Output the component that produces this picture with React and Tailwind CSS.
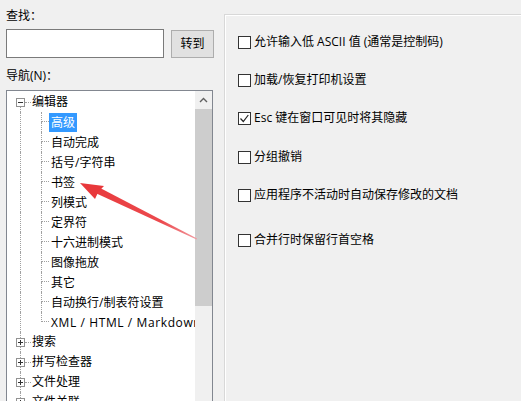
import React from 'react';

const editorItems = [
  '高级',
  '自动完成',
  '括号/字符串',
  '书签',
  '列模式',
  '定界符',
  '十六进制模式',
  '图像拖放',
  '其它',
  '自动换行/制表符设置',
  'XML / HTML / Markdown',
];

const otherRoots = ['搜索', '拼写检查器', '文件处理', '文件关联'];

const options = [
  { label: '允许输入低 ASCII 值 (通常是控制码)', checked: false, mt: 'mt-[17px]' },
  { label: '加载/恢复打印机设置', checked: false, mt: 'mt-[18px]' },
  { label: 'Esc 键在窗口可见时将其隐藏', checked: true, mt: 'mt-[18px]' },
  { label: '分组撤销', checked: false, mt: 'mt-[19px]' },
  { label: '应用程序不活动时自动保存修改的文档', checked: false, mt: 'mt-[18px]' },
  { label: '合并行时保留行首空格', checked: false, mt: 'mt-[25px]' },
];

function ExpandBox({ open }) {
  return (
    <svg width="9" height="9" className="shrink-0 block">
      <rect x="0.5" y="0.5" width="8" height="8" fill="#fff" stroke="#919191" />
      <path d="M2 4.5h5" stroke="#333" />
      {!open && <path d="M4.5 2v5" stroke="#333" />}
    </svg>
  );
}

function RootRow({ label, open, first }) {
  return (
    <div className="flex h-[20px]">
      <div className="w-[9px]" />
      <div className="w-[9px] flex flex-col items-center">
        <div className={first ? 'w-0 flex-1' : 'w-0 flex-1 border-l border-dotted border-[#a0a0a0]'} />
        <ExpandBox open={open} />
        <div className="w-0 flex-1 border-l border-dotted border-[#a0a0a0]" />
      </div>
      <div className="w-[6px] flex items-center">
        <div className="w-full border-t border-dotted border-[#a0a0a0]" />
      </div>
      <span className="ml-[1px] leading-[20px] whitespace-nowrap">{label}</span>
    </div>
  );
}

function ChildRow({ label, selected, last }) {
  let cls = 'self-center h-[19px] leading-[19px] px-[2px] whitespace-nowrap';
  if (selected) cls += ' bg-[#3399ff] text-white';
  if (last) cls += ' tracking-[0.6px]';
  return (
    <div className="flex h-[20px]">
      <div className="w-[9px] shrink-0" />
      <div className="w-[9px] shrink-0 flex justify-center">
        <div className="w-0 h-full border-l border-dotted border-[#a0a0a0]" />
      </div>
      <div className="w-[16px] shrink-0" />
      <div className="w-[8px] shrink-0 flex flex-col">
        <div className="h-[10px] border-l border-b border-dotted border-[#a0a0a0]" />
        <div className={last ? 'flex-1' : 'flex-1 border-l border-dotted border-[#a0a0a0]'} />
      </div>
      <span className={cls}>{label}</span>
    </div>
  );
}

function CheckBox({ checked }) {
  return (
    <svg width="13" height="13" className="shrink-0 block">
      <rect x="0.5" y="0.5" width="12" height="12" fill="#fff" stroke="#333" />
      {checked && <path d="M2.5 6.5l2.8 3 5-6.5" fill="none" stroke="#222" strokeWidth="1.2" />}
    </svg>
  );
}

export default function App() {
  return (
    <div className="relative w-[521px] h-[401px] overflow-hidden bg-[#f0f0f0] text-[12px] text-black font-['Open_Sans','Noto_Sans_CJK_SC',sans-serif] flex">
      {/* left column */}
      <div className="w-[224px] shrink-0 pl-[6px] pt-[6px] flex flex-col">
        <div className="leading-[20px]">查找：</div>
        <div className="mt-[3px] flex items-center">
          <div className="w-[158px] h-[29px] border border-[#7a7a7a] bg-white" />
          <button className="ml-[7px] w-[43px] h-[28px] border border-[#adadad] bg-[#e1e1e1] leading-[26px] text-center">
            转到
          </button>
        </div>
        <div className="mt-[8px] leading-[20px]">导航(N)：</div>
        <div className="mt-[4px] w-[207px] h-[330px] shrink-0 border border-[#828790] bg-white flex">
          <div className="flex-1 min-w-0 overflow-hidden pt-[1px]">
            <RootRow label="编辑器" open first />
            {editorItems.map((item, i) => (
              <ChildRow
                key={item}
                label={item}
                selected={i === 0}
                last={i === editorItems.length - 1}
              />
            ))}
            {otherRoots.map((item) => (
              <RootRow key={item} label={item} />
            ))}
          </div>
          <div className="w-[17px] shrink-0 bg-[#f0f0f0] flex flex-col">
            <div className="h-[17px] flex items-center justify-center">
              <svg width="9" height="6">
                <path d="M1 5l3.5-3.5L8 5" fill="none" stroke="#606060" strokeWidth="1.4" />
              </svg>
            </div>
            <div className="mt-[1px] h-[197px] bg-[#cdcdcd]" />
          </div>
        </div>
      </div>

      {/* right panel */}
      <div className="mt-[14px] flex-1 border-l border-t border-[#d8d8d8] shadow-[inset_1px_1px_0_#ffffff] pl-[13px] flex flex-col">
        {options.map((o) => (
          <div key={o.label} className={`${o.mt} h-[20px] flex items-center`}>
            <CheckBox checked={o.checked} />
            <span className="ml-[3px] whitespace-nowrap leading-[20px]">{o.label}</span>
          </div>
        ))}
      </div>

      {/* red annotation arrow */}
      <svg className="absolute left-0 top-0 pointer-events-none" width="521" height="401">
        <defs>
          <linearGradient id="fade" x1="80" y1="183" x2="197" y2="239" gradientUnits="userSpaceOnUse">
            <stop offset="0" stopColor="#e8383b" />
            <stop offset="0.7" stopColor="#ec4a4e" />
            <stop offset="1" stopColor="#f29aa0" />
          </linearGradient>
        </defs>
        <polygon points="96.5,193.6 99.2,187.4 197,238.6 196.6,239.4" fill="url(#fade)" />
        <polygon points="80,183 104,186 98.5,191.5 95,199" fill="#e8383b" />
      </svg>
    </div>
  );
}
